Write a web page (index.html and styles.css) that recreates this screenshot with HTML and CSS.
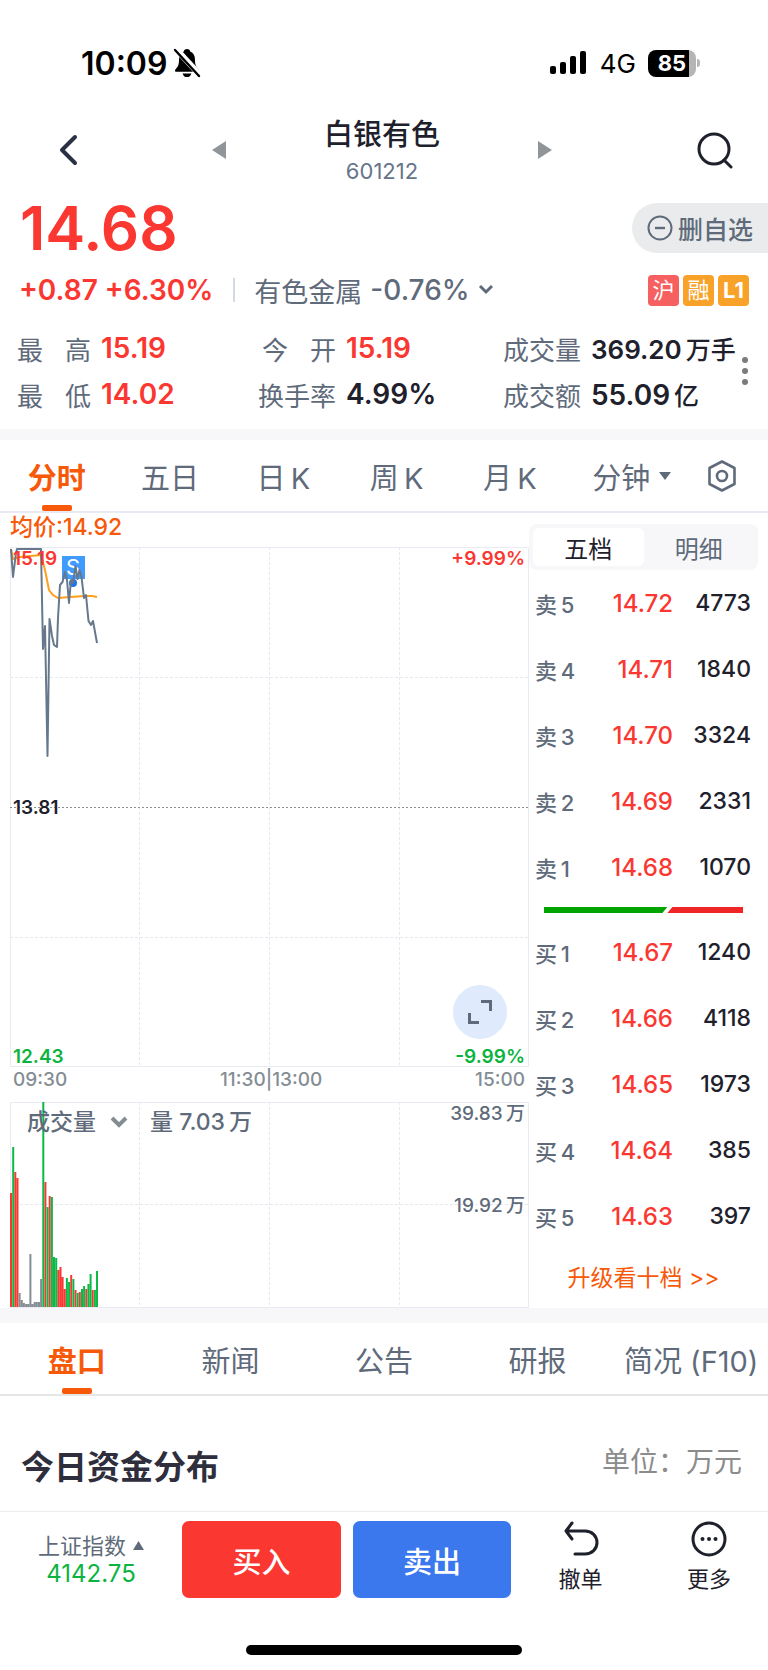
FILE: index.html
```html
<!DOCTYPE html>
<html lang="zh-CN">
<head>
    <meta charset="UTF-8">
    <meta name="viewport" content="width=device-width, initial-scale=1">
    <title>白银有色 601212</title>
    <link rel="stylesheet" href="styles.css">
</head>

<body>

<div class="status-bar">
    <div class="status-left">
        <span class="clock">10:09</span>
        <svg width="28" height="30" viewBox="0 0 28 30">
            <path d="M14 1c2 0 3 1 3.200 2.600C20.600 5 22 8 22 12c0 5 1.200 7 3.600 9.400.8 1 .4 2.400-1 2.400H3.400c-1.400 0-1.800-1.400-1-2.400C4.800 19 6 17 6 12c0-4 1.400-7 4.800-8.400C11 2 12 1 14 1z" fill="#000"/>
            <path d="M9.600 25.400h8.800c-.6 2.400-2.200 3.600-4.400 3.600s-3.800-1.200-4.400-3.600z" fill="#000"/>
            <path d="M3 1l24 26" stroke="#fff" stroke-width="6"/>
            <path d="M2 2l24 26" stroke="#000" stroke-width="2.400" stroke-linecap="round"/>
        </svg>
    </div>
    <div class="status-right">
        <svg width="38" height="26" viewBox="0 0 38 26">
            <rect x="0" y="16" width="6" height="8" rx="2"/>
            <rect x="10" y="12" width="6" height="12" rx="2"/>
            <rect x="20" y="6" width="6" height="18" rx="2"/>
            <rect x="30" y="1" width="6" height="23" rx="2"/>
        </svg>
        <span class="network">4G</span>
        <div class="battery"><span>85</span></div>
        <div class="battery-tip"></div>
    </div>
</div>

<header class="nav">
    <button class="icon-btn" aria-label="返回">
        <svg width="22" height="34" viewBox="0 0 22 34" fill="none" stroke="#2b3145" stroke-width="4" stroke-linecap="round" stroke-linejoin="round"><path d="M18 4L5 17l13 13"/></svg>
    </button>
    <button class="icon-btn" aria-label="上一只">
        <svg width="14" height="18" viewBox="0 0 14 18" fill="#909599"><path d="M14 0v18L0 9z"/></svg>
    </button>
    <div class="nav-title">
        <h1>白银有色</h1>
        <p>601212</p>
    </div>
    <button class="icon-btn" aria-label="下一只">
        <svg width="14" height="18" viewBox="0 0 14 18" fill="#909599"><path d="M0 0v18l14-9z"/></svg>
    </button>
    <button class="icon-btn search-btn" aria-label="搜索">
        <svg width="38" height="38" viewBox="0 0 38 38" fill="none" stroke="#1e212c" stroke-width="3" stroke-linecap="round"><circle cx="18" cy="18" r="15"/><path d="M28 29l7 7"/></svg>
    </button>
</header>

<section class="quote">
    <div class="price-row">
        <strong class="price">14.68</strong>
        <button class="watch-btn">
            <svg width="26" height="26" viewBox="0 0 26 26" fill="none" stroke="#5f6b7b" stroke-width="2"><circle cx="13" cy="13" r="11.500"/><path d="M8 13h10" stroke-width="2.400"/></svg>
            删自选
        </button>
    </div>

    <div class="change-row">
        <span class="change">+0.87 +6.30%</span>
        <a class="sector" href="#">
            有色金属 <b>-0.76%</b>
            <svg width="16" height="12" viewBox="0 0 16 12" fill="none" stroke="#5f6b7b" stroke-width="3"><path d="M2 2l6 6 6-6"/></svg>
        </a>
        <div class="badges">
            <span class="badge badge-red">沪</span>
            <span class="badge">融</span>
            <span class="badge badge-level">L1</span>
        </div>
    </div>

    <div class="stats-row">
        <dl class="stats">
            <div><dt class="spread">最 高</dt><dd class="up">15.19</dd></div>
            <div><dt class="spread">今 开</dt><dd class="up">15.19</dd></div>
            <div><dt>成交量</dt><dd class="long">369.20<small>万手</small></dd></div>
            <div><dt class="spread">最 低</dt><dd class="up">14.02</dd></div>
            <div><dt>换手率</dt><dd>4.99%</dd></div>
            <div><dt>成交额</dt><dd>55.09<small>亿</small></dd></div>
        </dl>
        <button class="icon-btn dots-btn" aria-label="更多指标">
            <svg width="8" height="30" viewBox="0 0 8 30" fill="#7b7b7b"><circle cx="4" cy="4" r="3"/><circle cx="4" cy="15" r="3"/><circle cx="4" cy="26" r="3"/></svg>
        </button>
    </div>
</section>

<nav class="tabs period-tabs">
    <button class="tab active">分时</button>
    <button class="tab">五日</button>
    <button class="tab">日&thinsp;K</button>
    <button class="tab">周&thinsp;K</button>
    <button class="tab">月&thinsp;K</button>
    <button class="tab tab-minute">分钟
        <svg width="12" height="8" viewBox="0 0 12 8" fill="#5f6b7b"><path d="M0 0h12L6 8z"/></svg>
    </button>
    <button class="icon-btn" aria-label="设置">
        <svg width="32" height="34" viewBox="0 0 32 34" fill="none" stroke="#5f6b7b" stroke-width="2.600" stroke-linejoin="round"><path d="M16 2.500l12.500 6.500v16L16 31.500 3.500 25V9z"/><circle cx="16" cy="17" r="5"/></svg>
    </button>
</nav>

<main class="market">
    <div class="charts">
        <p class="average">均价:14.92</p>

        <div class="chart">
            <svg class="plot" viewBox="0 0 519 520">
                <g class="grid-lines">
                    <path d="M129.500 0v520M259.500 0v520M389.500 0v520M0 130.500h519M0 390.500h519"/>
                </g>
                <path class="frame" d="M.5.5h518v519H.5z"/>
                <path class="prev-close" d="M0 260.500h519"/>
                <rect x="52" y="9" width="23" height="23" fill="#409bff"/>
                <text class="mark" x="63" y="28">S</text>
                <circle cx="63" cy="36" r="4" fill="#1f74e8"/>
                <path class="line-average" d="M1 2l2 10 7-2 21-2 4 15 4 20 4 5 5 3 12-1 15-1h7l5 1"/>
                <path class="line-price" d="M1 2l2 28 3-24 1-4h24l2 100 2-23 2.500 130L39.500 72l2.500 17 2 9 3 2 1-29 2-33 2.500-3 2.500-10 2 8 2 23 2-23 2 3 2.500-17 2 13 2-9 2 7 2.500 21 2-3 2.500 26 2.500 4 2-4 2 11 2 11"/>
            </svg>
            <span class="mark-label top-left up">15.19</span>
            <span class="mark-label top-right up">+9.99%</span>
            <span class="mark-label middle-left">13.81</span>
            <span class="mark-label bottom-left down">12.43</span>
            <span class="mark-label bottom-right down">-9.99%</span>
            <button class="icon-btn expand-btn" aria-label="全屏">
                <svg width="26" height="26" viewBox="0 0 26 26" fill="none" stroke="#5f6b7b" stroke-width="3"><path d="M14 2.500h9.500V12M2.500 14v9.500H12"/></svg>
            </button>
        </div>

        <div class="time-axis">
            <span>09:30</span>
            <span>11:30|13:00</span>
            <span>15:00</span>
        </div>

        <div class="chart volume-chart">
            <svg class="plot" viewBox="0 0 519 206">
                <g class="grid-lines">
                    <path d="M129.500 0v206M259.500 0v206M389.500 0v206M0 102.500h519"/>
                </g>
                <path class="frame" d="M.5.5h518v205H.5z"/>
                <path class="bars bars-up" d="M1 205V91M5.300 205V70M7.500 205V76M35.400 205V80M39.700 205V94M48.300 205v-37M50.500 205v-40M52.600 205v-30M54.800 205v-18M61.200 205v-32M65.500 205v-17M69.800 205v-15M76.300 205v-18M82.700 205v-17"/>
                <path class="bars bars-down" d="M3.200 205V45M33.300 205V0M37.600 205V105M41.900 205V95M44 205v-50M46.200 205v-49M56.900 205v-29M59.100 205v-25M63.400 205v-28M67.700 205v-14M72 205v-18M74.100 205v-21M78.400 205v-23M80.600 205v-33M84.900 205v-17M87 205v-36"/>
                <path class="bars bars-flat" d="M9.600 205v-14M11.800 205v-7M13.900 205v-4M16.100 205v-3M18.200 205v-3M20.400 205v-53M22.500 205v-3M24.700 205v-5M26.800 205v-5M29 205v-5M31.100 205v-28"/>
            </svg>
            <div class="volume-head">
                <button class="indicator-btn">成交量
                    <svg width="18" height="12" viewBox="0 0 18 12" fill="none" stroke="#858d94" stroke-width="4"><path d="M2 2l7 7 7-7"/></svg>
                </button>
                <span>量 7.03&thinsp;万</span>
            </div>
            <span class="mark-label top-right muted">39.83&thinsp;万</span>
            <span class="mark-label middle-right muted">19.92&thinsp;万</span>
        </div>
    </div>

    <aside class="order-book">
        <div class="segment">
            <button class="active">五档</button>
            <button>明细</button>
        </div>

        <table class="orders">
            <tr><th scope="row">卖&thinsp;5</th><td class="up">14.72</td><td>4773</td></tr>
            <tr><th scope="row">卖&thinsp;4</th><td class="up">14.71</td><td>1840</td></tr>
            <tr><th scope="row">卖&thinsp;3</th><td class="up">14.70</td><td>3324</td></tr>
            <tr><th scope="row">卖&thinsp;2</th><td class="up">14.69</td><td>2331</td></tr>
            <tr><th scope="row">卖&thinsp;1</th><td class="up">14.68</td><td>1070</td></tr>
        </table>

        <div class="ratio">
            <div class="ratio-sell" style="width: 62%"></div>
            <div class="ratio-buy"></div>
        </div>

        <table class="orders">
            <tr><th scope="row">买&thinsp;1</th><td class="up">14.67</td><td>1240</td></tr>
            <tr><th scope="row">买&thinsp;2</th><td class="up">14.66</td><td>4118</td></tr>
            <tr><th scope="row">买&thinsp;3</th><td class="up">14.65</td><td>1973</td></tr>
            <tr><th scope="row">买&thinsp;4</th><td class="up">14.64</td><td>385</td></tr>
            <tr><th scope="row">买&thinsp;5</th><td class="up">14.63</td><td>397</td></tr>
        </table>

        <a class="upgrade" href="#">升级看十档 &gt;&gt;</a>
    </aside>
</main>

<nav class="tabs info-tabs">
    <button class="tab active">盘口</button>
    <button class="tab">新闻</button>
    <button class="tab">公告</button>
    <button class="tab">研报</button>
    <button class="tab">简况 (F10)</button>
</nav>

<section class="funds">
    <h2>今日资金分布</h2>
    <span>单位：万元</span>
</section>

<footer class="trade-bar">
    <button class="index-btn">
        <span>上证指数
            <svg width="11" height="9" viewBox="0 0 11 9" fill="#5f6b7b"><path d="M0 9h11L5.500 0z"/></svg>
        </span>
        <b>4142.75</b>
    </button>
    <button class="trade-btn buy">买入</button>
    <button class="trade-btn sell">卖出</button>
    <button class="tool-btn">
        <svg width="36" height="36" viewBox="0 0 36 36" fill="none" stroke="#1e212c" stroke-width="3" stroke-linecap="round" stroke-linejoin="round"><path d="M9 2L3 10l6 8M3 10h19c7 0 12 5 12 11.500S29 33 22 33H12"/></svg>
        撤单
    </button>
    <button class="tool-btn">
        <svg width="36" height="36" viewBox="0 0 36 36" fill="none" stroke="#1e212c" stroke-width="3"><circle cx="18" cy="18" r="16"/><g fill="#1e212c" stroke="none"><circle cx="11.500" cy="18" r="2"/><circle cx="18" cy="18" r="2"/><circle cx="24.500" cy="18" r="2"/></g></svg>
        更多
    </button>
</footer>

<div class="home-indicator"></div>

</body>
</html>
```
FILE: styles.css
```css
* {
    box-sizing: border-box;
}

body {
    margin: 0;
    font-family: Inter, 'Noto Sans CJK SC', sans-serif;
    color: #1e212c;
    background: #fff;
}

h1, h2, p, dl, dd {
    margin: 0;
}

button {
    padding: 0;
    border: none;
    background: none;
    font: inherit;
    color: inherit;
    cursor: pointer;
}

a {
    color: inherit;
    text-decoration: none;
}

svg {
    display: block;
    flex: none;
}

.icon-btn {
    display: flex;
    align-items: center;
    justify-content: center;
}

.up {
    color: #fb3731;
}

.down {
    color: #0cb43f;
}

/* status bar */
.status-bar {
    display: flex;
    justify-content: space-between;
    align-items: center;
    height: 110px;
    padding: 16px 68px 0 81px;
    color: #000;
}

.status-left, .status-right {
    display: flex;
    align-items: center;
}

.status-left {
    gap: 6px;
}

.clock {
    font-size: 32px;
    font-weight: 600;
}

.network {
    margin: 0 12px;
    font-size: 26px;
}

.battery {
    width: 48px;
    height: 27px;
    border-radius: 8px;
    background: linear-gradient(to right, #000 85%, #b5b5b5 85%);
    color: #fff;
    font-size: 22px;
    font-weight: 700;
    line-height: 27px;
    text-align: center;
}

.battery-tip {
    width: 3px;
    height: 8px;
    margin-left: 1px;
    border-radius: 0 3px 3px 0;
    background: #b5b5b5;
}

/* title */
.nav {
    display: grid;
    grid-template-columns: 68fr 83fr 80fr 83fr 70fr;
    height: 80px;
}

.nav-title {
    text-align: center;
}

.nav-title h1 {
    font-size: 29px;
    font-weight: 500;
    line-height: 50px;
}

.nav-title p {
    font-size: 22px;
    line-height: 22px;
    color: #67748a;
}

.search-btn {
    padding-left: 34px;
}

/* quote */
.quote {
    padding-bottom: 12px;
}

.price-row {
    display: flex;
    justify-content: space-between;
    align-items: center;
    height: 76px;
    padding-left: 20px;
}

.price {
    font-size: 60px;
    font-weight: 600;
    color: #fb3731;
}

.watch-btn {
    display: flex;
    align-items: center;
    gap: 5px;
    height: 50px;
    padding: 0 15px;
    border-radius: 25px 0 0 25px;
    background: #e9ebed;
    color: #5f6b7b;
    font-size: 25px;
    font-weight: 500;
}

.change-row {
    display: flex;
    align-items: center;
    height: 48px;
    padding: 0 19px;
    font-size: 28px;
}

.change {
    padding-right: 20px;
    font-weight: 600;
    line-height: 24px;
    color: #fb3731;
    border-right: 2px solid #d4dae4;
}

.sector {
    display: flex;
    align-items: center;
    gap: 8px;
    padding-left: 19px;
    font-size: 27px;
    color: #5f6b7b;
}

.sector b {
    font-size: 28px;
    font-weight: 500;
}

.badges {
    display: flex;
    gap: 4px;
    margin-left: auto;
}

.badge {
    width: 31px;
    height: 31px;
    border-radius: 4px;
    background: #f9a22a;
    color: #fff;
    font-size: 22px;
    line-height: 31px;
    text-align: center;
}

.badge-red {
    background: #f66060;
}

.badge-level {
    font-weight: 700;
}

.stats-row {
    display: flex;
    align-items: center;
    padding: 11px 16px 0 13px;
}

.stats {
    flex: 1;
    display: grid;
    grid-template-columns: 49fr 49fr minmax(0, 47fr);
}

.stats div {
    display: flex;
    align-items: center;
    gap: 10px;
    height: 46px;
    white-space: nowrap;
}

.stats dt {
    width: 78px;
    font-size: 26px;
    color: #5f6b7b;
}

.stats .spread {
    padding-left: 4px;
    text-align-last: justify;
}

.stats dd {
    font-size: 28px;
    font-weight: 600;
}

.stats .long {
    font-size: 26px;
}

.stats small {
    margin-left: 4px;
    font-size: 25px;
    font-weight: 500;
}

.dots-btn {
    width: 14px;
}

/* tabs */
.tabs {
    display: flex;
    border-top: 11px solid #f7f7fa;
    border-bottom: 2px solid #e9ebf2;
    color: #5f6b7b;
    font-size: 29px;
}

.tab {
    position: relative;
    flex: 113;
    height: 71px;
    white-space: nowrap;
}

.tab.active {
    color: #f7590a;
    font-weight: 700;
}

.tab.active::after {
    content: "";
    position: absolute;
    left: 50%;
    bottom: 0;
    width: 30px;
    height: 6px;
    margin-left: -15px;
    border-radius: 2px;
    background: #f7590a;
}

.tab-minute {
    display: flex;
    align-items: center;
    justify-content: center;
    gap: 9px;
    flex: 130;
}

.period-tabs .icon-btn {
    width: 50px;
    margin-right: 21px;
}

.info-tabs {
    border-top-width: 15px;
    border-bottom-color: #e6e6e6;
}

.info-tabs .tab {
    flex: 1 1 0;
}

/* charts */
.market {
    display: flex;
}

.charts {
    flex: 1;
    padding-left: 10px;
}

.average {
    height: 34px;
    font-size: 23px;
    font-weight: 500;
    line-height: 28px;
    color: #f7590a;
}

.chart {
    position: relative;
}

.plot {
    width: 100%;
    height: auto;
}

.plot path {
    fill: none;
}

.plot .frame {
    stroke: #e9ebf2;
}

.grid-lines {
    stroke: #e6e8ef;
    stroke-dasharray: 3 2;
}

.prev-close {
    stroke: #8c8f96;
    stroke-dasharray: 2 2;
}

.mark {
    fill: #fff;
    font-size: 22px;
    text-anchor: middle;
}

.line-average {
    stroke: #ff9f1a;
    stroke-width: 2;
}

.line-price {
    stroke: #66788c;
    stroke-width: 2;
    stroke-linejoin: round;
}

.bars {
    stroke-width: 2;
}

.bars-up {
    stroke: #fb3731;
}

.bars-down {
    stroke: #0cb848;
}

.bars-flat {
    stroke: #858d94;
}

.mark-label {
    position: absolute;
    font-size: 19px;
    font-weight: 600;
    line-height: 22px;
}

.top-left {
    top: 1px;
    left: 3px;
}

.top-right {
    top: 1px;
    right: 4px;
}

.middle-left {
    top: 50%;
    left: 3px;
    margin-top: -10px;
}

.middle-right {
    top: 50%;
    right: 4px;
    margin-top: -10px;
}

.bottom-left {
    bottom: -1px;
    left: 3px;
}

.bottom-right {
    right: 4px;
    bottom: -1px;
}

.muted {
    color: #5f6b7b;
    font-weight: 500;
}

.expand-btn {
    position: absolute;
    right: 22px;
    bottom: 28px;
    width: 54px;
    height: 54px;
    border-radius: 50%;
    background: #dfeafc;
}

.time-axis {
    display: flex;
    justify-content: space-between;
    height: 35px;
    padding: 0 4px 0 3px;
    color: #858d94;
    font-size: 19px;
    font-weight: 500;
    line-height: 26px;
}

.volume-head {
    position: absolute;
    top: 4px;
    left: 17px;
    display: flex;
    gap: 22px;
    color: #5f6b7b;
    font-size: 23px;
    font-weight: 500;
    line-height: 32px;
}

.indicator-btn {
    display: flex;
    align-items: center;
    gap: 14px;
}

/* order book */
.order-book {
    width: 239px;
    padding: 11px 10px 0 0;
}

.segment {
    display: flex;
    height: 46px;
    padding: 4px;
    border-radius: 8px;
    background: #f7f7fa;
    color: #5f6b7b;
    font-size: 24px;
}

.segment button {
    flex: 1;
    border-radius: 6px;
}

.segment .active {
    background: #fff;
    color: #1e212c;
}

.orders {
    width: 100%;
    border-collapse: collapse;
    font-size: 23px;
    font-weight: 500;
}

.orders tr {
    height: 66px;
}

.orders th {
    width: 56px;
    padding: 0 0 0 6px;
    color: #5f6b7b;
    font-size: 22px;
    font-weight: 500;
    text-align: left;
    white-space: nowrap;
}

.orders td {
    padding: 0;
    text-align: right;
}

.orders .up {
    font-size: 24px;
}

.orders td:last-child {
    width: 85px;
    padding-right: 7px;
}

.ratio {
    display: flex;
    height: 6px;
    margin: 7px 15px 6px;
}

.ratio-sell {
    background: #00a300;
    clip-path: polygon(0 0, 100% 0, calc(100% - 5px) 100%, 0 100%);
}

.ratio-buy {
    flex: 1;
    background: #f02626;
    clip-path: polygon(5px 0, 100% 0, 100% 100%, 0 100%);
}

.upgrade {
    display: block;
    font-size: 23px;
    line-height: 59px;
    color: #f7590a;
    text-align: center;
}

/* funds */
.funds {
    display: flex;
    justify-content: space-between;
    height: 115px;
    padding: 0 26px 0 21px;
}

.funds h2 {
    font-size: 33px;
    font-weight: 700;
    line-height: 142px;
    color: #2e2e3d;
}

.funds span {
    font-size: 28px;
    line-height: 132px;
    color: #8c8c8c;
}

/* trade bar */
.trade-bar {
    display: grid;
    grid-template-columns: 182fr 171fr 158fr 129fr 128fr;
    height: 96px;
    padding-top: 9px;
    border-top: 1px solid #ededed;
}

.index-btn {
    display: flex;
    flex-direction: column;
    align-items: center;
    justify-content: center;
    height: 77px;
    color: #5f6b7b;
    font-size: 22px;
    line-height: 28px;
}

.index-btn span {
    display: flex;
    align-items: center;
    gap: 7px;
}

.index-btn b {
    font-size: 24px;
    font-weight: 400;
    color: #0cb43f;
}

.trade-btn {
    height: 77px;
    border-radius: 7px;
    color: #fff;
    font-size: 29px;
    font-weight: 500;
}

.buy {
    margin-right: 12px;
    background: #fb3731;
}

.sell {
    background: #3c78ed;
}

.tool-btn {
    display: flex;
    flex-direction: column;
    align-items: center;
    height: 77px;
    padding-left: 10px;
    font-size: 22px;
    line-height: 44px;
}

.home-indicator {
    width: 36%;
    height: 10px;
    margin: 38px auto 15px;
    border-radius: 5px;
    background: #000;
}
```
